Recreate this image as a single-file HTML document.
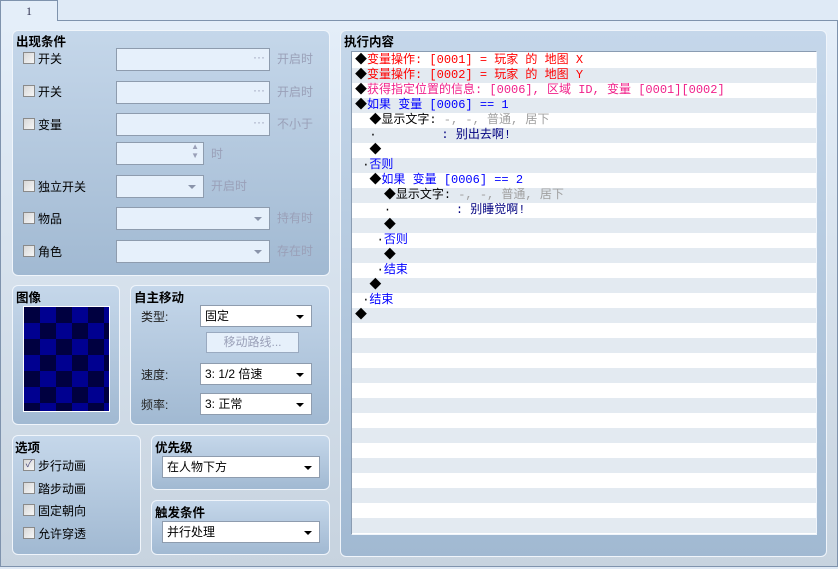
<!DOCTYPE html><html><head><meta charset="utf-8"><style>
*{box-sizing:border-box;margin:0;padding:0}
body{width:838px;height:569px;overflow:hidden;font-family:"Liberation Sans","Noto Sans CJK SC",sans-serif;font-size:12px;background:#dfe9f5;position:relative}
.a{position:absolute}
.body{left:0;top:20px;width:838px;height:547px;border:1px solid #7f93ad;background:linear-gradient(#e4eef9,#c7d3df)}
.tab{left:0;top:0;width:58px;height:21px;border:1px solid #7f93ad;border-bottom:none;background:#e4eef9;text-align:center;line-height:20px;color:#303050;font-family:"Liberation Serif",serif;z-index:2}
.tabline{left:58px;top:0;width:780px;height:20px;background:#dfeaf6}
.p{border:1px solid #f0f5fb;border-radius:6px;background:linear-gradient(#c5d7ea,#a1b9d2)}
.t{font-weight:bold;color:#000;font-size:12.5px}
.cb{width:12px;height:12px;border:1px solid #8a8a8a;background:linear-gradient(135deg,#d8d8d8,#f6f6f6)}
.lb{color:#000}
.in{background:#e6f0fb;border:1px solid #8e9cae;height:23px}
.g{color:#9aa0b8}
.cmb{background:#fff;border:1px solid #8e9cae;height:22px;padding-left:4px;line-height:20px}
.arr{position:absolute;right:7px;top:9px;width:0;height:0;border-left:4px solid transparent;border-right:4px solid transparent;border-top:4px solid #000}
.arrg{border-top-color:#8a94aa}
.row{position:absolute;left:0;width:464px;height:15px;line-height:15px;white-space:pre;padding-left:3px;font-family:"Liberation Mono","Noto Sans CJK SC",monospace;font-size:12px}
.r{color:#f00}.m{color:#f0208a}.b{color:#0000ff}.k{color:#000}.gr{color:#a0a0a0}.n{color:#000080}
</style></head><body>
<div class="a tabline"></div>
<div class="a body"></div>
<div class="a tab">1</div>

<div class="a p" style="left:12px;top:30px;width:318px;height:246px"></div>
<div class="a t" style="left:16px;top:31px">出现条件</div>
<!-- rows -->
<div class="a cb" style="left:23px;top:52px"></div><div class="a lb" style="left:38px;top:50px">开关</div>
<div class="a in" style="left:116px;top:48px;width:154px"><span class="a g" style="right:4px;top:1px">···</span></div><div class="a g" style="left:277px;top:50px">开启时</div>
<div class="a cb" style="left:23px;top:85px"></div><div class="a lb" style="left:38px;top:83px">开关</div>
<div class="a in" style="left:116px;top:81px;width:154px"><span class="a g" style="right:4px;top:1px">···</span></div><div class="a g" style="left:277px;top:83px">开启时</div>
<div class="a cb" style="left:23px;top:118px"></div><div class="a lb" style="left:38px;top:116px">变量</div>
<div class="a in" style="left:116px;top:113px;width:154px"><span class="a g" style="right:4px;top:1px">···</span></div><div class="a g" style="left:277px;top:115px">不小于</div>
<div class="a in" style="left:116px;top:142px;width:88px"><span class="a g" style="right:4px;top:-1px;font-size:8px;line-height:9px">▲<br>▼</span></div><div class="a g" style="left:211px;top:145px">时</div>
<div class="a cb" style="left:23px;top:180px"></div><div class="a lb" style="left:38px;top:178px">独立开关</div>
<div class="a in" style="left:116px;top:175px;width:88px"><div class="arr arrg"></div></div><div class="a g" style="left:211px;top:177px">开启时</div>
<div class="a cb" style="left:23px;top:212px"></div><div class="a lb" style="left:38px;top:210px">物品</div>
<div class="a in" style="left:116px;top:207px;width:154px"><div class="arr arrg"></div></div><div class="a g" style="left:277px;top:209px">持有时</div>
<div class="a cb" style="left:23px;top:245px"></div><div class="a lb" style="left:38px;top:243px">角色</div>
<div class="a in" style="left:116px;top:240px;width:154px"><div class="arr arrg"></div></div><div class="a g" style="left:277px;top:242px">存在时</div>

<!-- image -->
<div class="a p" style="left:12px;top:285px;width:108px;height:140px"></div>
<div class="a t" style="left:16px;top:287px">图像</div>
<div class="a" style="left:23px;top:306px;width:87px;height:106px;border:1px solid #fff;overflow:hidden;background-color:#000040;background-image:linear-gradient(45deg,#000090 25%,transparent 25%,transparent 75%,#000090 75%),linear-gradient(45deg,#000090 25%,transparent 25%,transparent 75%,#000090 75%);background-size:32px 32px;background-position:0 0,16px 16px"></div>

<div class="a p" style="left:130px;top:285px;width:200px;height:140px"></div>
<div class="a t" style="left:134px;top:287px">自主移动</div>
<div class="a lb" style="left:141px;top:308px;color:#202020">类型:</div>
<div class="a cmb" style="left:200px;top:305px;width:112px">固定<div class="arr"></div></div>
<div class="a" style="left:206px;top:332px;width:93px;height:21px;border:1px solid #9aaac0;background:#e6f0fb;color:#9aa0b8;text-align:center;line-height:19px">移动路线...</div>
<div class="a lb" style="left:141px;top:366px;color:#202020">速度:</div>
<div class="a cmb" style="left:200px;top:363px;width:112px">3: 1/2 倍速<div class="arr"></div></div>
<div class="a lb" style="left:141px;top:396px;color:#202020">频率:</div>
<div class="a cmb" style="left:200px;top:393px;width:112px">3: 正常<div class="arr"></div></div>

<div class="a p" style="left:12px;top:435px;width:129px;height:120px"></div>
<div class="a t" style="left:15px;top:437px">选项</div>
<div class="a cb" style="left:23px;top:459px;font-size:10px;line-height:10px;color:#505080;text-align:center">✓</div><div class="a lb" style="left:38px;top:457px">步行动画</div>
<div class="a cb" style="left:23px;top:482px"></div><div class="a lb" style="left:38px;top:480px">踏步动画</div>
<div class="a cb" style="left:23px;top:504px"></div><div class="a lb" style="left:38px;top:502px">固定朝向</div>
<div class="a cb" style="left:23px;top:527px"></div><div class="a lb" style="left:38px;top:525px">允许穿透</div>

<div class="a p" style="left:151px;top:435px;width:179px;height:55px"></div>
<div class="a t" style="left:155px;top:437px">优先级</div>
<div class="a cmb" style="left:162px;top:456px;width:158px">在人物下方<div class="arr"></div></div>
<div class="a p" style="left:151px;top:500px;width:179px;height:55px"></div>
<div class="a t" style="left:155px;top:502px">触发条件</div>
<div class="a cmb" style="left:162px;top:521px;width:158px">并行处理<div class="arr"></div></div>

<!-- exec -->
<div class="a p" style="left:340px;top:30px;width:487px;height:527px"></div>
<div class="a t" style="left:344px;top:31px">执行内容</div>
<div class="a" style="left:351px;top:51px;width:466px;height:484px;border:1px solid #8a9cb2;border-right-color:#f0f5fb;border-bottom-color:#f0f5fb;background:#fff;overflow:hidden">
<div style="position:absolute;left:0;top:0;width:464px;height:482px;background:repeating-linear-gradient(#fff 0 15px,#e3eaf1 15px 30px);background-position:0 1px"></div>
<div class="row" style="top:1px"><span class="k">◆</span><span class="r">变量操作: [0001] = 玩家 的 地图 X</span></div>
<div class="row" style="top:16px"><span class="k">◆</span><span class="r">变量操作: [0002] = 玩家 的 地图 Y</span></div>
<div class="row" style="top:31px"><span class="k">◆</span><span class="m">获得指定位置的信息: [0006], 区域 ID, 变量 [0001][0002]</span></div>
<div class="row" style="top:46px"><span class="k">◆</span><span class="b">如果 变量 [0006] == 1</span></div>
<div class="row" style="top:61px">  <span class="k">◆显示文字:</span><span class="gr"> -, -, 普通, 居下</span></div>
<div class="row" style="top:76px">  <span class="k">·</span>         <span class="n">: 别出去啊!</span></div>
<div class="row" style="top:91px">  <span class="k">◆</span></div>
<div class="row" style="top:106px"><span class="k"> ·</span><span class="b">否则</span></div>
<div class="row" style="top:121px">  <span class="k">◆</span><span class="b">如果 变量 [0006] == 2</span></div>
<div class="row" style="top:136px">    <span class="k">◆显示文字:</span><span class="gr"> -, -, 普通, 居下</span></div>
<div class="row" style="top:151px">    <span class="k">·</span>         <span class="n">: 别睡觉啊!</span></div>
<div class="row" style="top:166px">    <span class="k">◆</span></div>
<div class="row" style="top:181px">   <span class="k">·</span><span class="b">否则</span></div>
<div class="row" style="top:196px">    <span class="k">◆</span></div>
<div class="row" style="top:211px">   <span class="k">·</span><span class="b">结束</span></div>
<div class="row" style="top:226px">  <span class="k">◆</span></div>
<div class="row" style="top:241px"><span class="k"> ·</span><span class="b">结束</span></div>
<div class="row" style="top:256px"><span class="k">◆</span></div>
</div>
</body></html>
